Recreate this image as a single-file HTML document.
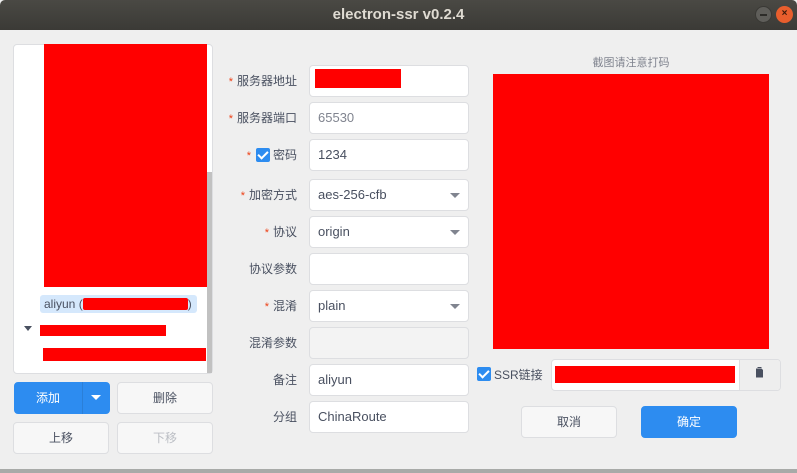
<!DOCTYPE html>
<html><head><meta charset="utf-8"><style>
*{box-sizing:border-box;margin:0;padding:0}
body{width:797px;height:473px;background:#efefef;position:relative;overflow:hidden;font-family:"Liberation Sans","Noto Sans CJK SC",sans-serif;font-size:12px;color:#495060}
.a{position:absolute}
.red{position:absolute;background:#f00}
.inp{position:absolute;left:309px;width:160px;height:32px;background:#fff;border:1px solid #dddee1;border-radius:4px;padding-left:8px;line-height:30px;font-size:13px;color:#495060}
.lab{position:absolute;right:500px;width:120px;text-align:right;font-size:12px;color:#495060;line-height:16px}
.st{color:#ed3f14;margin-right:4px;font-size:11px}
.arr{position:absolute;right:8px;top:13px;width:0;height:0;border-left:5px solid transparent;border-right:5px solid transparent;border-top:5px solid #80848f}
.btn{position:absolute;height:32px;border:1px solid #dddee1;border-radius:4px;background:#f7f7f7;text-align:center;line-height:30px;font-size:12px;color:#495060}
.blue{background:#2d8cf0;border-color:#2d8cf0;color:#fff}
.cb{position:absolute;width:14px;height:14px;background:#2d8cf0;border-radius:2px}
.cb:after{content:"";position:absolute;left:4px;top:1px;width:4px;height:8px;border:solid #fff;border-width:0 2px 2px 0;transform:rotate(45deg)}
</style></head><body>
<div class="a" style="left:0;top:0;width:797px;height:30px;background:linear-gradient(#4a4944,#3b3a36);border-radius:5px 5px 0 0"></div>
<div class="a" style="left:0;top:6px;width:797px;text-align:center;color:#dfdbd2;font-weight:bold;font-size:15px;font-family:'Liberation Sans',sans-serif">electron-ssr v0.2.4</div>
<div class="a" style="left:755px;top:6px;width:17px;height:17px;border-radius:50%;background:#5f5e5a;border:1px solid #3a3935"><div class="a" style="left:4px;top:7px;width:7px;height:1.5px;background:#2d2c29"></div></div>
<div class="a" style="left:776px;top:6px;width:17px;height:17px;border-radius:50%;background:#e85e2d;color:#3a1a0a;font-size:10px;text-align:center;line-height:16px;font-weight:bold">×</div>
<div class="a" style="left:0;top:469px;width:797px;height:4px;background:#a8aaa8"></div>

<div class="a" style="left:13px;top:44px;width:200px;height:330px;background:#fff;border:1px solid #dddee1;border-radius:4px"></div>
<div class="red" style="left:44px;top:44px;width:163px;height:243px"></div>
<div class="a" style="left:207px;top:172px;width:5px;height:201px;background:#c1c1c1"></div>
<div class="a" style="left:40px;top:295px;width:157px;height:18px;background:#d5e8fc;border-radius:3px;line-height:18px;padding-left:4px;font-size:12px">aliyun (<span style="display:inline-block;width:105px"></span>)</div>
<div class="red" style="left:83px;top:298px;width:105px;height:12px;border-radius:2px"></div>
<div class="a" style="left:24px;top:326px;border-left:4px solid transparent;border-right:4px solid transparent;border-top:5px solid #495060"></div>
<div class="red" style="left:40px;top:325px;width:126px;height:11px"></div>
<div class="red" style="left:43px;top:348px;width:163px;height:13px"></div>

<div class="btn blue" style="left:14px;top:382px;width:96px">&nbsp;</div>
<div class="a" style="left:14px;top:382px;width:68px;line-height:32px;text-align:center;color:#fff">添加</div>
<div class="a" style="left:82px;top:382px;width:1px;height:32px;background:#2a7fd8"></div>
<div class="a" style="left:91px;top:395px;border-left:5px solid transparent;border-right:5px solid transparent;border-top:5px solid #fff"></div>
<div class="btn" style="left:117px;top:382px;width:96px">删除</div>
<div class="btn" style="left:13px;top:422px;width:96px">上移</div>
<div class="btn" style="left:117px;top:422px;width:96px;color:#bbbec4">下移</div>

<div class="lab" style="top:73px"><span class="st">*</span>服务器地址</div>
<div class="inp" style="top:65px"></div><div class="red" style="left:315px;top:69px;width:86px;height:19px"></div>
<div class="lab" style="top:110px"><span class="st">*</span>服务器端口</div>
<div class="inp" style="top:102px;color:#80848f">65530</div>
<div class="lab" style="top:147px"><span class="st">*</span><span style="display:inline-block;width:18px"></span>密码</div>
<div class="cb" style="left:256px;top:148px"></div>
<div class="inp" style="top:139px">1234</div>
<div class="lab" style="top:187px"><span class="st">*</span>加密方式</div>
<div class="inp" style="top:179px">aes-256-cfb<div class="arr"></div></div>
<div class="lab" style="top:224px"><span class="st">*</span>协议</div>
<div class="inp" style="top:216px">origin<div class="arr"></div></div>
<div class="lab" style="top:261px">协议参数</div>
<div class="inp" style="top:253px"></div>
<div class="lab" style="top:298px"><span class="st">*</span>混淆</div>
<div class="inp" style="top:290px">plain<div class="arr"></div></div>
<div class="lab" style="top:335px">混淆参数</div>
<div class="inp" style="top:327px;background:#f3f3f3"></div>
<div class="lab" style="top:372px">备注</div>
<div class="inp" style="top:364px">aliyun</div>
<div class="lab" style="top:409px">分组</div>
<div class="inp" style="top:401px">ChinaRoute</div>

<div class="a" style="left:493px;top:54px;width:276px;text-align:center;color:#80848f;font-size:11px">截图请注意打码</div>
<div class="red" style="left:493px;top:74px;width:276px;height:275px"></div>
<div class="cb" style="left:477px;top:367px"></div>
<div class="a" style="left:494px;top:366px;font-size:12px">SSR链接</div>
<div class="a" style="left:551px;top:359px;width:230px;height:32px;background:#fff;border:1px solid #dddee1;border-radius:4px;overflow:hidden"><div class="a" style="left:187px;top:0;width:42px;height:30px;background:#eee;border-left:1px solid #dddee1"></div></div>
<div class="red" style="left:555px;top:366px;width:180px;height:17px"></div>
<svg class="a" style="left:755px;top:367px" width="9" height="11" viewBox="0 0 9 11"><path d="M1 1.5h5.5L8 3v7.5H1z" fill="#495060"/><path d="M2.5 0.5h4" stroke="#495060"/></svg>
<div class="btn" style="left:521px;top:406px;width:96px">取消</div>
<div class="btn blue" style="left:641px;top:406px;width:96px">确定</div>
</body></html>
